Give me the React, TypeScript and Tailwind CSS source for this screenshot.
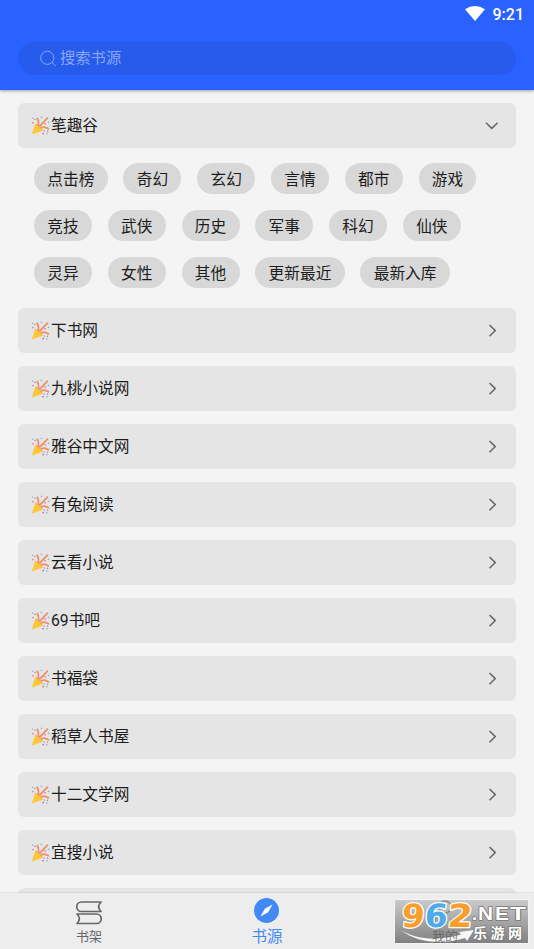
const chips = [
  "点击榜", "奇幻", "玄幻", "言情", "都市", "游戏",
  "竞技", "武侠", "历史", "军事", "科幻", "仙侠",
  "灵异", "女性", "其他", "更新最近", "最新入库",
];

const sources = [
  "下书网",
  "九桃小说网",
  "雅谷中文网",
  "有兔阅读",
  "云看小说",
  "69书吧",
  "书福袋",
  "稻草人书屋",
  "十二文学网",
  "宜搜小说",
  "",
];

function PartyIcon() {
  return (
    <svg className="h-[19px] w-[19px] shrink-0" viewBox="0 0 19 19" fill="none">
      <path d="M.8 18.4 4.200 8Q9.500 9.800 11.600 14.800Z" fill="#fdc737" />
      <path d="M4.400 8.200Q9.500 9.800 11.400 14.600" stroke="#f6ad45" strokeWidth="1" />
      <path d="M7.400 9.200Q8 5 6.400 2.400M9 9.800 16.400 2.200M10.600 11.800Q13.400 10 17.400 12.800" stroke="#ee8f68" strokeWidth="1.9" strokeLinecap="round" />
      <g fill="#6cbfe0">
        <circle cx="1.6" cy="2.2" r=".8" />
        <circle cx="10.4" cy="1.4" r=".8" />
        <circle cx="17.6" cy="6.4" r=".8" />
        <circle cx="13.2" cy="15" r=".8" />
        <circle cx="16" cy="17.8" r=".8" />
      </g>
      <g fill="#df6685">
        <circle cx="4" cy="3.4" r=".7" />
        <circle cx="2" cy="6.8" r=".8" />
        <circle cx="14.2" cy="7.8" r=".8" />
        <circle cx="12.2" cy="17.6" r=".9" />
        <circle cx="16.6" cy="15.2" r=".7" />
      </g>
    </svg>
  );
}

function SourceRow({ name, open = false }: { name: string; open?: boolean }) {
  return (
    <div className="flex h-[45px] shrink-0 items-center rounded-[6px] bg-[#e5e5e5] pr-[17px] pl-[13px]">
      {name ? <PartyIcon /> : null}
      <span className="ml-px flex-1 text-[15.7px] leading-[22px]">{name}</span>
      <svg className="h-[14px] w-[14px]" viewBox="0 0 14 14" fill="none" stroke="#666" strokeWidth="1.5">
        <path d={open ? "M1 3.8 6.800 9.400 12.600 3.800" : "M4.500 1 10.300 6.600 4.500 12.200"} />
      </svg>
    </div>
  );
}

function Watermark() {
  return (
    <svg className="absolute top-[5px] left-[394px] h-[46px] w-[136px]" viewBox="0 0 136 46">
      <defs>
        <linearGradient id="plate" x1="0" y1="0" x2="0" y2="1">
          <stop offset="0" stopColor="#cbcbcb" />
          <stop offset="1" stopColor="#808080" />
        </linearGradient>
      </defs>
      <rect x=".5" y="1.5" width="134" height="44" fill="url(#plate)" stroke="#f4f4f4" />
      <g stroke="#8c8c8c" strokeWidth="1.6" fill="none">
        <circle cx="51" cy="9" r="6" />
        <path d="M41 24q0-8 10-8" />
      </g>
      <path d="M7 32C22 42 46 43 67 36.500L65 34 80 32 73 43 71 40C49 47 22 45 7 32Z" fill="#f6f6f6" />
      <text x="38" y="43" fontSize="13" fill="#5c5c5c" fillOpacity=".75" fontFamily="Noto Sans CJK SC, sans-serif">我的</text>
      <g
        transform="translate(7 28.5) skewX(-4)"
        fontFamily="DejaVu Sans, sans-serif"
        fontWeight="700"
        fontSize="32"
        stroke="#fff"
        strokeWidth="2.5"
        strokeLinejoin="round"
        paintOrder="stroke"
      >
        <text x="0" y="0" textLength="23" lengthAdjust="spacingAndGlyphs" fill="#f99d2b">9</text>
        <text x="23" y="0" textLength="23" lengthAdjust="spacingAndGlyphs" fill="#4cabe8">6</text>
        <text x="46" y="0" textLength="25" lengthAdjust="spacingAndGlyphs" fill="#f99d2b">2</text>
      </g>
      <g fill="#fff" stroke="#777" strokeWidth="1.5" strokeLinejoin="round" paintOrder="stroke" fontWeight="700">
        <g fontFamily="Liberation Sans, sans-serif" fontSize="18">
          <text x="78" y="22">.</text>
          <text x="84" y="22" textLength="15" lengthAdjust="spacingAndGlyphs">N</text>
          <text x="101" y="22" textLength="14" lengthAdjust="spacingAndGlyphs">E</text>
          <text x="116" y="22" textLength="16" lengthAdjust="spacingAndGlyphs">T</text>
        </g>
        <text x="79" y="40" fontSize="14" textLength="49" fontFamily="Noto Sans CJK SC, sans-serif">乐游网</text>
      </g>
    </svg>
  );
}

export default function App() {
  return (
    <div className="flex h-[949px] w-[534px] flex-col overflow-hidden bg-[#f4f4f4] font-[Roboto,'Noto_Sans_CJK_SC',sans-serif] text-[#1c1c1c]">
      <header className="z-10 h-[90px] shrink-0 bg-[#2962ff] px-[18px] shadow-[0_1px_3px_rgba(0,0,0,0.35)]">
        <div className="-mr-[8px] flex h-[42px] items-start justify-end gap-2 pt-[5px] text-white">
          <svg className="mt-px h-[15px] w-5" viewBox="0 0 20 15">
            <path d="M0 3.200Q10-3.200 20 3.200L10 15Z" fill="#fff" />
          </svg>
          <span className="text-[16px] leading-[19px] font-medium">9:21</span>
        </div>
        <div className="flex h-[33px] items-center rounded-full bg-[#265bec] pl-[22px] text-[#8aa7f5]">
          <svg className="mr-[3px] h-[17px] w-[17px]" viewBox="0 0 17 17" fill="none" stroke="currentColor" strokeWidth="1">
            <circle cx="7.3" cy="7.8" r="6.6" />
            <path d="M12 12.500 15.800 16" />
          </svg>
          <span className="pb-px text-[15.3px] leading-[22px]">搜索书源</span>
        </div>
      </header>

      <main className="flex min-h-0 flex-1 flex-col gap-[13px] overflow-hidden px-[18px] pt-[13px]">
        <SourceRow name="笔趣谷" open />
        <div className="mt-[2px] mb-[7px] flex shrink-0 flex-wrap gap-x-[15.8px] gap-y-4 px-4">
          {chips.map((c) => (
            <span key={c} className="flex h-[31px] items-center rounded-full bg-[#d8d8d8] px-[13.3px] pt-[2px] text-[15.7px]">
              {c}
            </span>
          ))}
        </div>
        {sources.map((s) => (
          <SourceRow key={s} name={s} />
        ))}
      </main>

      <nav className="relative grid h-[56px] shrink-0 grid-cols-3 bg-[#ededed] shadow-[0_-1px_1px_rgba(0,0,0,0.06)]">
        <div className="flex flex-col items-center pt-2 text-[#666]">
          <svg className="h-6 w-[26px]" viewBox="0 0 26 24" fill="none" stroke="currentColor" strokeWidth="1.7" strokeLinejoin="round">
            <path d="M25 1H5.500a4.700 4.700 0 0 0 0 9.500H25C22 7.500 22 4 25 1Z" />
            <path d="M1 13H20.500a4.700 4.700 0 0 1 0 9.500H1C4 19.500 4 16 1 13Z" />
          </svg>
          <span className="mt-[2px] text-[13px] leading-[19px]">书架</span>
        </div>
        <div className="flex flex-col items-center pt-[5px] text-[#4389f5]">
          <svg className="mr-px h-[25px] w-[25px]" viewBox="0 0 25 25">
            <circle cx="12.5" cy="12.5" r="12.5" fill="currentColor" />
            <path d="M18.500 6.500 14.200 14.200 6.500 18.500 10.800 10.800Z" fill="#fff" />
          </svg>
          <span className="mt-[3px] text-[15.5px] leading-[22px]">书源</span>
        </div>
        <Watermark />
      </nav>
    </div>
  );
}
